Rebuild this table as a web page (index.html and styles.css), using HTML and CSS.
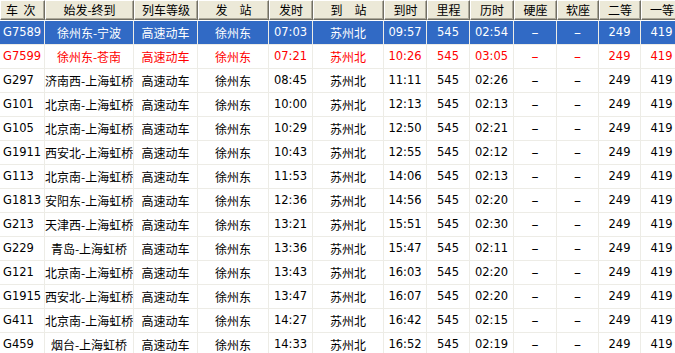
FILE: index.html
```html
<!DOCTYPE html>
<html lang="zh">
<head>
<meta charset="utf-8">
<title>车次列表</title>
<link rel="stylesheet" href="styles.css">
</head>
<body>
<table class="grid">
  <colgroup>
    <col class="w1"><col class="w2"><col class="w3"><col class="w4"><col class="w5"><col class="w6"><col class="w7"><col class="w8"><col class="w9"><col class="w10"><col class="w11"><col class="w12"><col class="w13">
  </colgroup>
  <thead>
    <tr>
      <th class="left">车  次</th><th>始发-终到</th><th>列车等级</th><th>发　站</th><th>发时</th><th>到　站</th><th>到时</th><th>里程</th><th>历时</th><th>硬座</th><th>软座</th><th>二等</th><th>一等</th>
    </tr>
  </thead>
  <tbody>
    <tr class="sel"><td class="num left">G7589</td><td class="zh">徐州东-宁波</td><td class="zh">高速动车</td><td class="zh">徐州东</td><td class="num">07:03</td><td class="zh">苏州北</td><td class="num">09:57</td><td class="num">545</td><td class="num">02:54</td><td class="dash">–</td><td class="dash">–</td><td class="num">249</td><td class="num">419</td></tr>
    <tr class="red"><td class="num left">G7599</td><td class="zh">徐州东-苍南</td><td class="zh">高速动车</td><td class="zh">徐州东</td><td class="num">07:21</td><td class="zh">苏州北</td><td class="num">10:26</td><td class="num">545</td><td class="num">03:05</td><td class="dash">–</td><td class="dash">–</td><td class="num">249</td><td class="num">419</td></tr>
    <tr><td class="num left">G297</td><td class="zh">济南西-上海虹桥</td><td class="zh">高速动车</td><td class="zh">徐州东</td><td class="num">08:45</td><td class="zh">苏州北</td><td class="num">11:11</td><td class="num">545</td><td class="num">02:26</td><td class="dash">–</td><td class="dash">–</td><td class="num">249</td><td class="num">419</td></tr>
    <tr><td class="num left">G101</td><td class="zh">北京南-上海虹桥</td><td class="zh">高速动车</td><td class="zh">徐州东</td><td class="num">10:00</td><td class="zh">苏州北</td><td class="num">12:13</td><td class="num">545</td><td class="num">02:13</td><td class="dash">–</td><td class="dash">–</td><td class="num">249</td><td class="num">419</td></tr>
    <tr><td class="num left">G105</td><td class="zh">北京南-上海虹桥</td><td class="zh">高速动车</td><td class="zh">徐州东</td><td class="num">10:29</td><td class="zh">苏州北</td><td class="num">12:50</td><td class="num">545</td><td class="num">02:21</td><td class="dash">–</td><td class="dash">–</td><td class="num">249</td><td class="num">419</td></tr>
    <tr><td class="num left">G1911</td><td class="zh">西安北-上海虹桥</td><td class="zh">高速动车</td><td class="zh">徐州东</td><td class="num">10:43</td><td class="zh">苏州北</td><td class="num">12:55</td><td class="num">545</td><td class="num">02:12</td><td class="dash">–</td><td class="dash">–</td><td class="num">249</td><td class="num">419</td></tr>
    <tr><td class="num left">G113</td><td class="zh">北京南-上海虹桥</td><td class="zh">高速动车</td><td class="zh">徐州东</td><td class="num">11:53</td><td class="zh">苏州北</td><td class="num">14:06</td><td class="num">545</td><td class="num">02:13</td><td class="dash">–</td><td class="dash">–</td><td class="num">249</td><td class="num">419</td></tr>
    <tr><td class="num left">G1813</td><td class="zh">安阳东-上海虹桥</td><td class="zh">高速动车</td><td class="zh">徐州东</td><td class="num">12:36</td><td class="zh">苏州北</td><td class="num">14:56</td><td class="num">545</td><td class="num">02:20</td><td class="dash">–</td><td class="dash">–</td><td class="num">249</td><td class="num">419</td></tr>
    <tr><td class="num left">G213</td><td class="zh">天津西-上海虹桥</td><td class="zh">高速动车</td><td class="zh">徐州东</td><td class="num">13:21</td><td class="zh">苏州北</td><td class="num">15:51</td><td class="num">545</td><td class="num">02:30</td><td class="dash">–</td><td class="dash">–</td><td class="num">249</td><td class="num">419</td></tr>
    <tr><td class="num left">G229</td><td class="zh">青岛-上海虹桥</td><td class="zh">高速动车</td><td class="zh">徐州东</td><td class="num">13:36</td><td class="zh">苏州北</td><td class="num">15:47</td><td class="num">545</td><td class="num">02:11</td><td class="dash">–</td><td class="dash">–</td><td class="num">249</td><td class="num">419</td></tr>
    <tr><td class="num left">G121</td><td class="zh">北京南-上海虹桥</td><td class="zh">高速动车</td><td class="zh">徐州东</td><td class="num">13:43</td><td class="zh">苏州北</td><td class="num">16:03</td><td class="num">545</td><td class="num">02:20</td><td class="dash">–</td><td class="dash">–</td><td class="num">249</td><td class="num">419</td></tr>
    <tr><td class="num left">G1915</td><td class="zh">西安北-上海虹桥</td><td class="zh">高速动车</td><td class="zh">徐州东</td><td class="num">13:47</td><td class="zh">苏州北</td><td class="num">16:07</td><td class="num">545</td><td class="num">02:20</td><td class="dash">–</td><td class="dash">–</td><td class="num">249</td><td class="num">419</td></tr>
    <tr><td class="num left">G411</td><td class="zh">北京南-上海虹桥</td><td class="zh">高速动车</td><td class="zh">徐州东</td><td class="num">14:27</td><td class="zh">苏州北</td><td class="num">16:42</td><td class="num">545</td><td class="num">02:15</td><td class="dash">–</td><td class="dash">–</td><td class="num">249</td><td class="num">419</td></tr>
    <tr><td class="num left">G459</td><td class="zh">烟台-上海虹桥</td><td class="zh">高速动车</td><td class="zh">徐州东</td><td class="num">14:33</td><td class="zh">苏州北</td><td class="num">16:52</td><td class="num">545</td><td class="num">02:19</td><td class="dash">–</td><td class="dash">–</td><td class="num">249</td><td class="num">419</td></tr>
  </tbody>
</table>
</body>
</html>
```

FILE: styles.css
```css
html, body {
  margin: 0;
  padding: 0;
  background: #ffffff;
  overflow: hidden;
}

.grid {
  table-layout: fixed;
  border-collapse: separate;
  border-spacing: 0;
  width: 683px;
  font-family: "DejaVu Sans", "Noto Sans CJK SC", sans-serif;
  color: #000000;
}

.w1 { width: 45px; }
.w2 { width: 89px; }
.w3 { width: 64px; }
.w4 { width: 71px; }
.w5 { width: 44px; }
.w6 { width: 71px; }
.w7 { width: 43px; }
.w8 { width: 43px; }
.w9 { width: 44px; }
.w10 { width: 43px; }
.w11 { width: 42px; }
.w12 { width: 42px; }
.w13 { width: 42px; }

.grid th {
  height: 18px;
  padding: 0;
  background: #ece9d8;
  border-top: 1px solid #ffffff;
  border-left: 1px solid #ffffff;
  border-right: 1px solid #716f64;
  border-bottom: 1px solid #716f64;
  box-shadow: inset -1px -1px 0 #aca899;
  font-family: "Noto Sans CJK SC", sans-serif;
  font-weight: normal;
  font-size: 12px;
  line-height: 18px;
  text-align: center;
  white-space: pre;
  overflow: hidden;
}

.grid th.left {
  text-align: left;
  padding-left: 5px;
}

.grid tbody tr:first-child td {
  border-top: 1px solid #ffffff;
}

.grid td {
  height: 23px;
  padding: 0;
  border-right: 1px solid #edece6;
  border-bottom: 1px solid #edece6;
  text-align: center;
  white-space: nowrap;
  overflow: hidden;
  line-height: 23px;
}

.grid td.num {
  font-size: 11.5px;
}

.grid td.dash {
  font-size: 14px;
}

.grid td.zh {
  font-family: "Noto Sans CJK SC", sans-serif;
  font-size: 12px;
}

.grid td.left {
  text-align: left;
  padding-left: 3px;
}

.grid tr.sel td {
  background: #316ac5;
  color: #ffffff;
}

.grid tr.red td {
  color: #ff0000;
}
```
